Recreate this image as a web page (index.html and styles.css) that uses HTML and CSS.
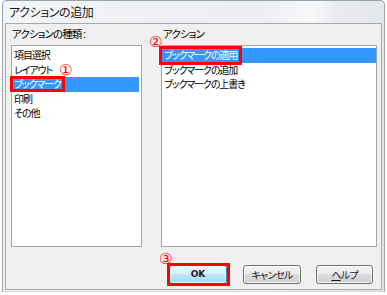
FILE: index.html
```html
<!DOCTYPE html>
<html lang="ja">
<head>
<meta charset="utf-8">
<link rel="stylesheet" href="styles.css">
</head>
<body>
<div class="window">
  <div class="titlebar">アクションの追加</div>
  <div class="client">
    <div class="columns">
      <div class="col">
        <div class="label">アクションの種類<span class="colon">:</span></div>
        <div class="list list-left">
          <div class="item">項目選択</div>
          <div class="item">レイアウト</div>
          <div class="item selected">ブックマーク</div>
          <div class="item">印刷</div>
          <div class="item">その他</div>
          <span class="mark mark-1"></span>
          <span class="num num-1">①</span>
        </div>
      </div>
      <div class="col">
        <div class="label">アクション</div>
        <div class="list list-right">
          <div class="item selected">ブックマークの適用</div>
          <div class="item">ブックマークの追加</div>
          <div class="item">ブックマークの上書き</div>
          <span class="mark mark-2"></span>
          <span class="num num-2">②</span>
        </div>
      </div>
    </div>
    <div class="buttons">
      <div class="btn btn-ok">OK<span class="mark mark-3"></span><span class="num num-3">③</span></div>
      <div class="btn">キャンセル</div>
      <div class="btn"><u>ヘ</u>ルプ</div>
    </div>
  </div>
</div>
</body>
</html>
```
FILE: styles.css
```css
* { box-sizing: border-box; }
html, body { margin: 0; padding: 0; }
body {
  width: 387px;
  height: 295px;
  background: #ffffff;
  font-family: "Noto Sans CJK JP", "Noto Sans", sans-serif;
  font-feature-settings: "palt";
  overflow: hidden;
}
.window {
  margin-left: 2px;
  width: 383px;
  height: 292px;
  border: 1px solid #9aa2ab;
  border-bottom-color: #d8d8d8;
  border-radius: 5px 5px 0 0;
  padding: 0 2px 2px 2px;
  background: linear-gradient(100deg, #f3f4f6 0%, #eceef1 60%, #f7f8fa 72%, #e9ebee 78%, #dfe2e6 100%);
}
.titlebar {
  height: 22px;
  padding: 4px 0 0 4px;
  font-size: 12px;
  line-height: 14px;
  letter-spacing: -0.4px;
  color: #1a1a1a;
}
.client {
  width: 377px;
  height: 267px;
  background: #f0f0f0;
  border: 1px solid #a9a9a9;
  padding: 3px 0 0 5px;
}
.columns {
  display: flex;
  gap: 19px;
}
.col { display: flex; flex-direction: column; }
.label {
  font-size: 10.5px;
  line-height: 14px;
  height: 14px;
  margin-bottom: 4px;
  letter-spacing: -0.9px;
  color: #000;
  padding-left: 1px;
}
.colon {
  font-family: "Liberation Sans", sans-serif;
  font-size: 11px;
  margin-left: 1.5px;
  letter-spacing: 0;
}
.col + .col .label { padding-left: 2px; }
.list {
  position: relative;
  height: 202px;
  background: #fff;
  border: 1px solid #a5a5a5;
  padding-top: 2px;
}
.list-left { width: 131px; padding-right: 2px; }
.list-right { width: 216px; padding-right: 0; }
.item {
  height: 14.5px;
  line-height: 14.5px;
  font-size: 10px;
  letter-spacing: -1.1px;
  padding-left: 2px;
  color: #000;
  white-space: nowrap;
}
.item.selected {
  background: #3399ff;
  color: #fff;
}
.mark {
  position: absolute;
  border: 3px solid #ff0000;
}
.mark-1 { left: -2px; top: 30px; width: 55px; height: 16px; }
.mark-2 { left: -3px; top: 0px; width: 83px; height: 19px; }
.num {
  position: absolute;
  color: #ff0000;
  font-family: "DejaVu Sans", sans-serif;
  font-size: 15px;
  line-height: 15px;
  letter-spacing: 0;
  font-feature-settings: normal;
}
.num-1 { left: 47px; top: 17px; }
.num-2 { left: -13px; top: -11px; }
.buttons {
  display: flex;
  gap: 16px;
  margin-top: 18px;
  padding-left: 158px;
}
.btn {
  position: relative;
  width: 58px;
  height: 19px;
  border: 1px solid #707070;
  border-radius: 3px;
  background: linear-gradient(#f2f2f2 0%, #ebebeb 45%, #dddddd 50%, #cfcfcf 100%);
  box-shadow: inset 0 0 0 1px rgba(255,255,255,0.7);
  font-size: 10px;
  letter-spacing: -0.8px;
  line-height: 17px;
  text-align: center;
  color: #1a1a1a;
}
.btn + .btn + .btn { width: 57px; margin-left: -1px; }
.btn-ok {
  border-color: #3c7fb1;
  background: linear-gradient(#eaf6fd 0%, #d9f0fc 45%, #bee6fd 50%, #a7d9f5 100%);
  font-family: "DejaVu Sans", sans-serif;
  font-weight: bold;
  letter-spacing: 0;
  font-size: 9px;
}
.btn u { text-decoration: underline; }
.mark-3 { left: -3px; top: -3px; width: 63px; height: 23px; }
.num-3 { left: -11px; top: -14px; font-weight: normal; font-size: 15px; }
```
